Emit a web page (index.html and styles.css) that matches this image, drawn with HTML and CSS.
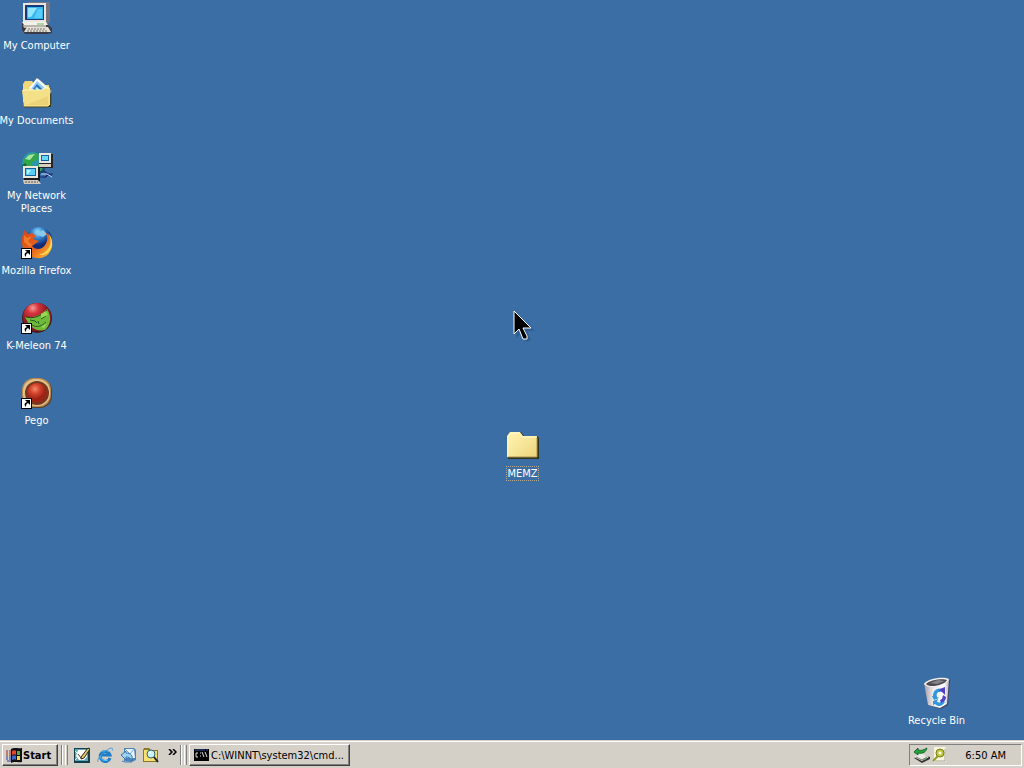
FILE: index.html
```html
<!DOCTYPE html>
<html lang="en">
<head>
<meta charset="utf-8">
<title>Desktop</title>
<link rel="stylesheet" href="styles.css">
</head>
<body>
<main class="desktop">
  <div class="icon-column">
    <button class="shortcut" type="button">
      <svg class="icon" viewBox="0 0 32 32" aria-hidden="true">
        <path d="M4 2l4-2h20l1 2v17l-3 3H6z" fill="#777a86"/>
        <path d="M2 1h23v19H2z" fill="#e9e5dc"/>
        <path d="M25 1l4 1v16l-4 3z" fill="#77737f"/>
        <path d="M4 3h19v15H4z" fill="#17397c"/>
        <path d="M6 5h16v12H6z" fill="#35b8f0"/>
        <path d="M7 6h9l-6 9H7z" fill="#92e6ff"/>
        <path d="M17 7h4v9h-8z" fill="#59cdfa"/>
        <path d="M1 21h24l6 5v5l-5 1H4l-3-4z" fill="#3b3b45"/>
        <path d="M1 20h24l2 3H3z" fill="#f4f1e8"/>
        <path d="M2 23h23v3H3z" fill="#b9b5ad"/>
        <path d="M6 25h21l3 5H3z" fill="#e4e0d7"/>
        <path d="M7 27h18M6 29h20" stroke="#77736f" stroke-dasharray="2 1"/>
        <path d="M16 22h7" stroke="#69b95e"/>
      </svg>
      <span class="label">My Computer</span>
    </button>
    <button class="shortcut" type="button">
      <svg class="icon" viewBox="0 0 32 32" aria-hidden="true">
        <path d="M3 9l2-3h7l2 3h14l2 3v18H5z" fill="#3b3d22"/>
        <path d="M2 7l2-3h7l3 4h14v17H2z" fill="#f0d878"/>
        <path d="M8 11l8-10 15 13-6 9z" fill="#fff"/>
        <path d="M10 12l6-8 11 10-4 5z" fill="#8fcdf2"/>
        <path d="M12 12l4-5 6 6-3 4z" fill="#2770bd"/>
        <path d="M14 11l2-1 3 3-2 2z" fill="#b9e4fb"/>
        <path d="M17 2l13 12" stroke="#dfe9f3"/>
        <path d="M1 13h20l2-2h6v17l-2 2H3z" fill="#f5e08a"/>
        <path d="M2 13h19l2-2h6" fill="none" stroke="#fff8bd"/>
        <path d="M3 30h24l3-3V13" fill="none" stroke="#4d4822"/>
        <path d="M5 28h22v-9z" fill="#edd377"/>
      </svg>
      <span class="label">My Documents</span>
    </button>
    <button class="shortcut" type="button">
      <svg class="icon" viewBox="0 0 32 32" aria-hidden="true">
        <circle cx="13" cy="12" r="12" fill="#16546f"/>
        <circle cx="12" cy="11" r="11" fill="#2b96b8"/>
        <path d="M2 8l6-6 8-1 2 3-3 5-5 2 3 4-4 3-5-3zM12 16l6-4 4 3-3 6-6-1z" fill="#34a64a"/>
        <path d="M4 7l4-4 6-1-5 6z" fill="#a3e5a4"/>
        <path d="M1 13l4-2 1 6-3 1z" fill="#176b44"/>
        <path d="M18 2h14v14H18z" fill="#25242a"/>
        <path d="M18 1h12v10H18z" fill="#ebe7dc"/>
        <path d="M20 3h8v6h-8z" fill="#1263a3"/>
        <path d="M21 4h6v4h-6z" fill="#69d8f8"/>
        <path d="M18 12h12v3H18z" fill="#d7d0c1"/>
        <path d="M3 15h16v14H3z" fill="#1b1b24"/>
        <path d="M2 14h15v12H2z" fill="#ece7dc"/>
        <path d="M4 16h11v8H4z" fill="#1264a0"/>
        <path d="M5 17h9v6H5z" fill="#5acef4"/>
        <path d="M6 18h4l-3 4H6z" fill="#c1f8ff"/>
        <path d="M2 28h15l3 4H3z" fill="#d3cbbd"/>
        <path d="M4 30h13" stroke="#555" stroke-dasharray="2 1"/>
        <path d="M19 20h5l3 2h5M19 25h6l2-2h4M22 18l5 4-4 4" fill="none" stroke="#162b72"/>
        <path d="M20 22h6l5 3" fill="none" stroke="#bcd8f2"/>
      </svg>
      <span class="label">My Network<br>Places</span>
    </button>
    <button class="shortcut" type="button">
      <svg class="icon" viewBox="0 0 32 32" aria-hidden="true">
        <defs>
          <radialGradient id="globe" cx="45%" cy="20%"><stop offset="0" stop-color="#a5e2fa"/><stop offset=".45" stop-color="#3688cf"/><stop offset="1" stop-color="#122b77"/></radialGradient>
          <linearGradient id="fox" x2="1" y2="1"><stop offset="0" stop-color="#d6441a"/><stop offset=".55" stop-color="#e7651c"/><stop offset="1" stop-color="#ffc63b"/></linearGradient>
        </defs>
        <circle cx="18" cy="13" r="13" fill="url(#globe)"/>
        <path d="M14 3l5 2 3-2 4 4-4 3-5-2z" fill="#88c9ed"/>
        <path d="M3 3l4 4 4-1 4 3-3 3 6 2-4 3-3 2c3 4 10 4 13-1 3-4 3-9 0-13 6 4 8 9 7 15-2 8-8 12-16 11C5 30 0 21 1 13c0-4 1-6 2-10z" fill="url(#fox)"/>
        <path d="M27 6c6 10 1 19-9 22 8 1 14-5 13-13 0-4-2-7-4-9z" fill="#ffdd52"/>
        <path d="M3 8l3 3 5-2-4 5 4 4-2 2-6-5z" fill="#f17b2a"/>
        <path d="M0 21h11v11H0z" fill="#000"/><path d="M1 22h9v9H1z" fill="#fff"/><path d="M4 23h5v5l-2-2c-2 1-2 2-2 4-2-2-2-4 1-5z"/>
      </svg>
      <span class="label">Mozilla Firefox</span>
    </button>
    <button class="shortcut" type="button">
      <svg class="icon" viewBox="0 0 32 32" aria-hidden="true">
        <defs><radialGradient id="red-ball" cx="35%" cy="18%"><stop offset="0" stop-color="#f39b98"/><stop offset=".4" stop-color="#d9353e"/><stop offset="1" stop-color="#8d1822"/></radialGradient></defs>
        <circle cx="16" cy="16" r="15" fill="#4a1b18"/>
        <circle cx="16" cy="15" r="14" fill="url(#red-ball)"/>
        <path d="M4 15c8 1 15-1 22-8 5 7 4 16-2 21-8 2-15-2-20-13z" fill="#6fb93c"/>
        <path d="M5 15c8 2 15-1 21-7" fill="none" stroke="#32401a"/>
        <path d="M9 18l5 1 2 2M20 17l5-3M11 23c5 3 10 1 14-3M17 19l1 3" fill="none" stroke="#275f20"/>
        <path d="M20 12l5-3 2 4-7 3zM20 25l6-4-3 5z" fill="#9ad853"/>
        <path d="M0 21h11v11H0z" fill="#000"/><path d="M1 22h9v9H1z" fill="#fff"/><path d="M4 23h5v5l-2-2c-2 1-2 2-2 4-2-2-2-4 1-5z"/>
      </svg>
      <span class="label">K-Meleon 74</span>
    </button>
    <button class="shortcut" type="button">
      <svg class="icon" viewBox="0 0 32 32" aria-hidden="true">
        <defs><radialGradient id="pego" cx="40%" cy="30%"><stop offset="0" stop-color="#f58a68"/><stop offset=".5" stop-color="#d2422c"/><stop offset="1" stop-color="#9c2416"/></radialGradient></defs>
        <rect x="2" y="2" width="29" height="29" rx="12" fill="#5b4027"/>
        <rect x="1" y="1" width="29" height="29" rx="12" fill="#b98950"/>
        <rect x="2" y="2" width="27" height="27" rx="12" fill="#e2c08a"/>
        <circle cx="16" cy="16" r="12" fill="#75391f"/>
        <circle cx="16" cy="16" r="10" fill="url(#pego)"/>
        <path d="M0 21h11v11H0z" fill="#000"/><path d="M1 22h9v9H1z" fill="#fff"/><path d="M4 23h5v5l-2-2c-2 1-2 2-2 4-2-2-2-4 1-5z"/>
      </svg>
      <span class="label">Pego</span>
    </button>
  </div>

  <button class="shortcut placed memz" type="button">
    <svg class="icon" viewBox="0 0 32 32" aria-hidden="true">
      <defs><linearGradient id="folder" x2="1" y2="1"><stop offset="0" stop-color="#fff5ae"/><stop offset=".5" stop-color="#f7e69a"/><stop offset="1" stop-color="#ecd27c"/></linearGradient></defs>
      <path d="M1 6l3-4h10l3 4h13l2 2v21H1z" fill="#2c3420"/>
      <path d="M0 6l3-4h10l3 4h14v21H0z" fill="url(#folder)"/>
      <path d="M1 27V7l3-4h8l3 4h14" fill="none" stroke="#fffad1"/>
      <path d="M1 27h29V8" fill="none" stroke="#a8924a"/>
    </svg>
    <span class="label focused">MEMZ</span>
  </button>

  <button class="shortcut placed recycle" type="button">
    <svg class="icon" viewBox="0 0 32 32" aria-hidden="true">
      <defs><linearGradient id="bin"><stop offset="0" stop-color="#a39aa6"/><stop offset=".35" stop-color="#ece6e8"/><stop offset=".8" stop-color="#fff"/><stop offset="1" stop-color="#b8b3c2"/></linearGradient></defs>
      <path d="M4 7l25-4-2 25-7 4-13-4z" fill="#3d4464"/>
      <path d="M3 6l25-3-2 24-7 4-12-3z" fill="url(#bin)"/>
      <path d="M3 7c2-5 19-8 25-5 0 5-20 12-25 5z" fill="#f2eef2"/>
      <path d="M5 7c3-4 17-6 21-4-1 4-17 9-21 4z" fill="#4c4b50"/>
      <path d="M9 6l8-3 7 1-8 3z" fill="#85838a"/>
      <path d="M12 19c0-6 5-9 9-7l-2 3c-3 0-4 2-3 5l2 1-5 2-2-4zM12 24l5-2-1 3c3 1 5 0 6-2l2 2c-3 5-7 5-10 2l-2 1z" fill="#3098e0"/>
      <path d="M19 12l5-2v8l-2-2c-1-1-2-2-4-2zM22 18l3 2c0 3-2 5-5 6l-1-3 2-1z" fill="#5142c2"/>
    </svg>
    <span class="label">Recycle Bin</span>
  </button>

  <svg class="pointer" viewBox="0 0 24 34" aria-hidden="true">
    <path d="M3 3v25l6-5 4 9 5-2-4-9h8z" fill="#1f3e63" opacity=".3"/>
    <path d="M1 1v23l5-5 4 10h4v-3l-4-8h8z" fill="#000" stroke="#fff"/>
  </svg>
</main>

<footer class="taskbar">
  <button class="bar-button start" type="button">
    <svg class="flag" viewBox="0 0 16 16" aria-hidden="true">
      <path d="M5 2c4-2 6 0 11-1v14c-5 1-7-1-11 1z" fill="#111"/>
      <path d="M6 4c2-1 3-1 4 0v4c-1-1-2-1-4 0z" fill="#e64431"/>
      <path d="M11 4h3v4h-3z" fill="#58a945"/>
      <path d="M6 9c2-1 3-1 4 0v4c-1-1-2-1-4 0z" fill="#3d66ce"/>
      <path d="M11 9h3v4h-3z" fill="#f2d444"/>
      <path d="M0 4h2M3 4h2M0 6h2M3 6h2M0 8h2M3 8h2" stroke="#a82824"/>
      <path d="M0 10h2M3 10h2M0 12h2M3 12h2M1 14h4" stroke="#263c9e"/>
    </svg>
    <span>Start</span>
  </button>
  <span class="grip"></span>
  <nav class="quick-launch" aria-label="Quick launch">
    <button class="quick" type="button" aria-label="Show Desktop">
      <svg viewBox="0 0 16 16"><path d="M0 1h16v15H0z" fill="#173e4b"/><path d="M1 2h13v12H1z" fill="#5ba9b6"/><path d="M4 3h9v7l-3 3H5L2 9z" fill="#fffdf1"/><path d="M4 7l3 4" fill="none" stroke="#444"/><path d="M7 10l7-9 2 1-6 9-3 1z" fill="#e6c766" stroke="#262626"/><path d="M1 13l2-2M1 4l2 2" stroke="#e7faf6"/></svg>
    </button>
    <button class="quick" type="button" aria-label="Internet Explorer">
      <svg viewBox="0 0 16 16"><path d="M13 11a5 5 0 1 1 0-3H4" fill="none" stroke="#1f7cc8" stroke-width="3"/><path d="M5 5c2-2 5-2 7 0M3 9c1 5 6 5 8 4" fill="none" stroke="#63c3f2"/><path d="M1 15c-2-3 7-12 13-14 3 0 1 3 1 3" fill="none" stroke="#4a9fd9"/></svg>
    </button>
    <button class="quick" type="button" aria-label="Outlook Express">
      <svg viewBox="0 0 16 16"><path d="M4 1h10l2 2v10l-4 2-8-1z" fill="#4d83bd"/><path d="M5 2h9l1 9H5z" fill="#e8f5ff"/><path d="M5 2l5 5 4-5" fill="none" stroke="#7ba6d2"/><path d="M1 8l5-4v2c5 0 8 3 5 8 0-3-2-4-5-4v3z" fill="#9ad2f3" stroke="#3773ac"/><path d="M2 14l3 1h7" fill="none" stroke="#497fb4"/></svg>
    </button>
    <button class="quick" type="button" aria-label="Search">
      <svg viewBox="0 0 16 16"><path d="M0 3l1-2h5l2 2h7v12H0z" fill="#8b772c"/><path d="M1 3h4l2 1h7v10H1z" fill="#f7df70"/><circle cx="8" cy="7" r="4" fill="#c9f3f8" stroke="#36616d"/><path d="M6 6l2-1" stroke="#fff"/><path d="M11 10l4 5" stroke="#20242a" stroke-width="2"/></svg>
    </button>
  </nav>
  <button class="more" type="button" aria-label="More shortcuts">
    <svg viewBox="0 0 9 6"><path d="M1 0l3 3-3 3M5 0l3 3-3 3" fill="none" stroke="#000" stroke-width="1.5"/></svg>
  </button>
  <span class="grip"></span>
  <button class="bar-button task" type="button">
    <svg class="console" viewBox="0 0 16 14" aria-hidden="true"><path d="M0 1h15v12H0z"/><path d="M1 2h13" stroke="#3655a5" stroke-dasharray="10 1"/><path d="M4 5H2v4h2M6 5h1M6 8h1M8 4l2 5M11 4l2 5" fill="none" stroke="#ddd"/></svg>
    <span>C:\WINNT\system32\cmd...</span>
  </button>
  <div class="tray">
    <svg class="tray-icon" viewBox="0 0 17 16" role="img" aria-label="Safely remove hardware"><path d="M1 11l7-4 9 3v2l-8 4z" fill="#333"/><path d="M1 10l7-4 8 4-7 4z" fill="#eceae4"/><path d="M3 10l6 3 5-3" fill="none" stroke="#77756f"/><path d="M1 5l4-4v2c3 1 6 0 9-2-1 4-4 6-9 5v2z" fill="#23a43c" stroke="#176a2c"/><path d="M10 12h3" stroke="#36bd48"/></svg>
    <svg class="tray-icon" viewBox="0 0 17 16" role="img" aria-label="Scheduler"><path d="M3 0h11l1 2v13H3z" fill="#f7f5df"/><path d="M14 2v12H4" fill="none" stroke="#a4a39a"/><circle cx="9" cy="6" r="4" fill="#c3c83c" stroke="#777f19"/><circle cx="9" cy="6" r="1.5" fill="#fff"/><path d="M7 9l-5 5" fill="none" stroke="#929a25" stroke-width="2"/></svg>
    <time class="clock">6:50 AM</time>
  </div>
</footer>
</body>
</html>
```
FILE: styles.css
```css
* { box-sizing: border-box; }

body {
  margin: 0;
  min-height: 100vh;
  display: flex;
  flex-direction: column;
  background: #3b6ea5;
  font-family: Tahoma, "DejaVu Sans Condensed", "Noto Sans", sans-serif;
  font-size: 11px;
  line-height: 13px;
  overflow: hidden;
}

button {
  font: inherit;
  color: inherit;
  border: 0;
  padding: 0;
  background: none;
}

svg { display: block; flex: none; }

.desktop {
  flex: 1;
  position: relative;
}

.icon-column {
  display: grid;
  grid-auto-rows: 75px;
  width: 73px;
}

.shortcut {
  display: flex;
  flex-direction: column;
  align-items: center;
  gap: 4px;
  width: 73px;
  padding-top: 2px;
  color: #fff;
}

.icon { width: 32px; height: 32px; }

.label {
  padding: 1px 0;
  text-align: center;
  white-space: nowrap;
}

.focused { outline: 1px dotted #b8a58a; outline-offset: -1px; padding: 1px; }

.placed { position: absolute; }
.memz { left: 486px; top: 428px; }
.recycle { right: 51px; bottom: 12px; }

.pointer {
  position: absolute;
  left: 513px;
  top: 310px;
  width: 24px;
  height: 34px;
}

.taskbar {
  display: flex;
  align-items: center;
  height: 28px;
  padding: 3px 2px 2px;
  background: #d4d0c8;
  border-top: 1px solid #d4d0c8;
  box-shadow: inset 0 1px #fff;
  color: #000;
}

.bar-button {
  display: flex;
  align-items: center;
  height: 22px;
  border: 1px solid;
  border-color: #fff #404040 #404040 #fff;
  box-shadow: inset -1px -1px #808080;
  white-space: nowrap;
}

.start {
  width: 56px;
  padding-left: 3px;
  gap: 1px;
  font-weight: bold;
}

.flag { width: 16px; height: 16px; }

.grip {
  width: 7px;
  height: 20px;
  margin-left: 3px;
  background: linear-gradient(to right, #808080 1px, #fff 1px 2px, #d4d0c8 2px 4px, #fff 4px 5px, #d4d0c8 5px 6px, #808080 6px);
}

.quick-launch {
  display: flex;
  gap: 7px;
  margin-left: 6px;
}

.quick svg { width: 16px; height: 16px; }

.more {
  align-self: flex-start;
  margin: 5px 0 0 9px;
}

.more svg { width: 9px; height: 6px; }

.task {
  width: 161px;
  margin-left: 2px;
  padding-left: 4px;
  gap: 1px;
}

.console { width: 16px; height: 14px; }

.tray {
  display: flex;
  align-items: center;
  gap: 1px;
  height: 22px;
  margin-left: auto;
  padding: 0 15px 0 3px;
  border: 1px solid;
  border-color: #808080 #fff #fff #808080;
}

.tray-icon { width: 17px; height: 16px; }
.clock { margin-left: 16px; white-space: nowrap; }
```
